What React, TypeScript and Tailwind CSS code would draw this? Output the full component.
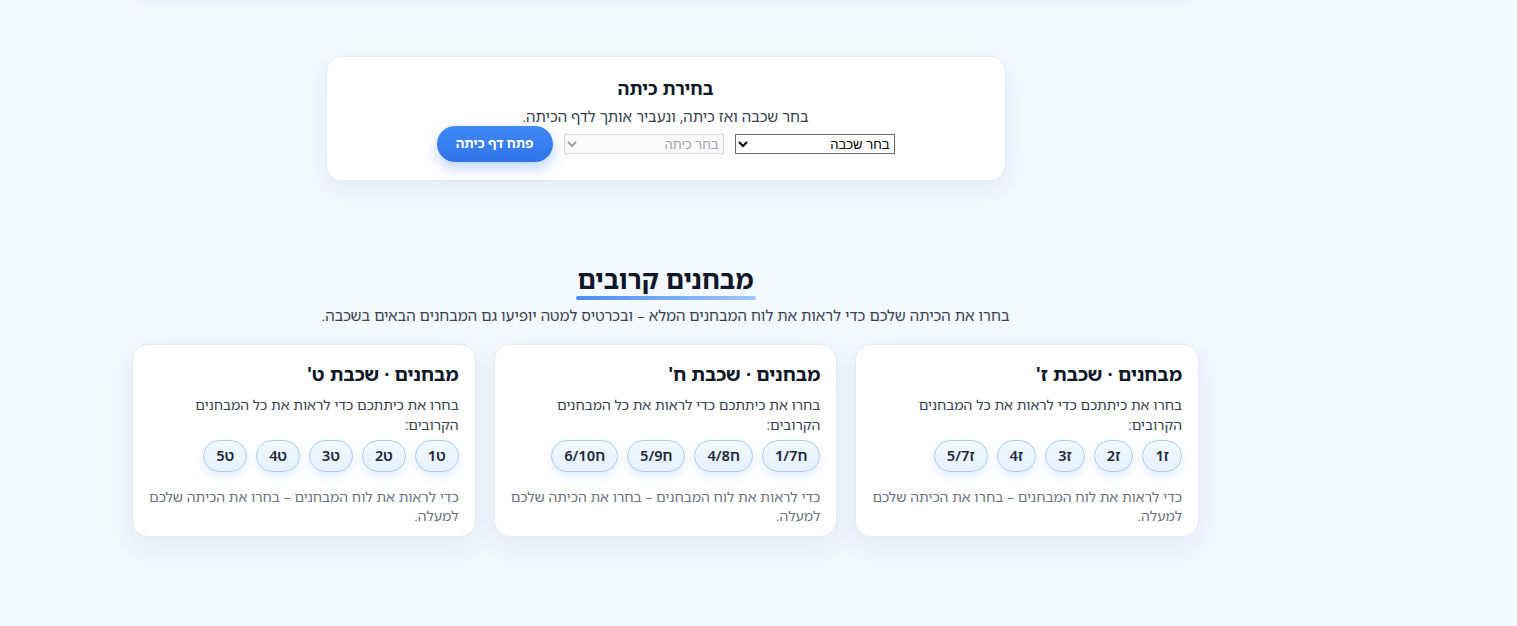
import { useState } from "react";

const grades = [
  { name: "ז'", classes: ["ז1", "ז2", "ז3", "ז4", "ז5/7"] },
  { name: "ח'", classes: ["ח1/7", "ח4/8", "ח5/9", "ח6/10"] },
  { name: "ט'", classes: ["ט1", "ט2", "ט3", "ט4", "ט5"] },
];

const font = { fontFamily: '"Noto Sans Hebrew", "Noto Sans", "Liberation Sans", "DejaVu Sans", sans-serif' };

function GradeCard({ name, classes }: { name: string; classes: string[] }) {
  return (
    <div className="w-[344px] rounded-2xl border border-[#e6ebf3] bg-white pr-[16px] pl-[12px] pt-[16px] pb-[11px] shadow-[0_10px_28px_rgba(30,50,90,0.08)]">
      <h3 className="text-[19px] font-bold leading-[26px] text-[#0f172a]">מבחנים · שכבת {name}</h3>
      <p className="mt-[8px] text-[14px] leading-[20px] text-[#374151]">
        בחרו את כיתתכם כדי לראות את כל המבחנים הקרובים:
      </p>
      <div className="mt-[5px] flex flex-wrap gap-[9px]">
        {classes.map((c) => (
          <button
            key={c}
            className="h-8 rounded-full border border-[#a9cdf8] bg-gradient-to-b from-[#f1f8ff] to-[#e6f1ff] px-[12px] text-[14.5px] font-semibold text-[#1e293b] shadow-[0_4px_10px_rgba(59,130,246,0.14)]"
          >
            {c}
          </button>
        ))}
      </div>
      <p className="mt-[15px] text-[14px] leading-[19px] text-[#6b7280]">
        כדי לראות את לוח המבחנים – בחרו את הכיתה שלכם למעלה.
      </p>
    </div>
  );
}

export default function App() {
  const [grade, setGrade] = useState("");

  return (
    <div dir="rtl" className="min-h-screen overflow-hidden bg-[#f4f8ff]" style={font}>
      <div className="mr-auto flex w-[1331px] flex-col items-center">
        <div className="mt-[-40px] h-[40px] w-[1067px] rounded-2xl bg-white shadow-[0_2px_12px_rgba(30,50,90,0.04)]" />

        <div className="mt-[56px] w-[680px] rounded-2xl border border-[#e6ebf3] bg-white pt-[19px] pb-[18px] text-center shadow-[0_8px_24px_rgba(30,50,90,0.07)]">
          <h2 className="text-[18px] font-bold leading-6 text-[#111827]">בחירת כיתה</h2>
          <p className="mt-[6px] text-[15px] leading-[20px] text-[#374151]">בחר שכבה ואז כיתה, ונעביר אותך לדף הכיתה.</p>
          <div className="flex items-center justify-center gap-[11px]">
            <select
              value={grade}
              onChange={(e) => setGrade(e.target.value)}
              className="h-[20px] w-[160px] border border-[#6b6b6b] bg-white text-[13px] text-black"
              style={{ fontFamily: '"Liberation Sans", Arial, sans-serif' }}
            >
              <option value="">בחר שכבה</option>
              <option value="7">ז'</option>
              <option value="8">ח'</option>
              <option value="9">ט'</option>
            </select>
            <select
              disabled
              className="h-[20px] w-[160px] border border-[#d8d8d8] bg-[#fafafa] text-[13px] text-[#9ca3af]"
              style={{ fontFamily: '"Liberation Sans", Arial, sans-serif' }}
            >
              <option>בחר כיתה</option>
            </select>
            <button className="h-9 w-[116px] rounded-full bg-gradient-to-b from-[#4089f6] to-[#2f74e8] text-[13px] font-bold text-white shadow-[0_6px_14px_rgba(59,130,246,0.35)]">
              פתח דף כיתה
            </button>
          </div>
        </div>

        <div className="mt-[81px] flex flex-col items-center">
          <h2 className="text-[26px] font-bold leading-[34px] text-[#0f172a]">מבחנים קרובים</h2>
          <div className="h-[4px] w-[180px] rounded-full bg-gradient-to-l from-[#9cc8fb] to-[#4a8cf5]" />
        </div>
        <p className="mt-[5px] text-[15px] leading-[20px] text-[#374151]">
          בחרו את הכיתה שלכם כדי לראות את לוח המבחנים המלא – ובכרטיס למטה יופיעו גם המבחנים הבאים בשכבה.
        </p>

        <div className="mt-[19px] flex w-[1067px] gap-[18px]">
          {grades.map((g) => (
            <GradeCard key={g.name} name={g.name} classes={g.classes} />
          ))}
        </div>
      </div>
    </div>
  );
}
